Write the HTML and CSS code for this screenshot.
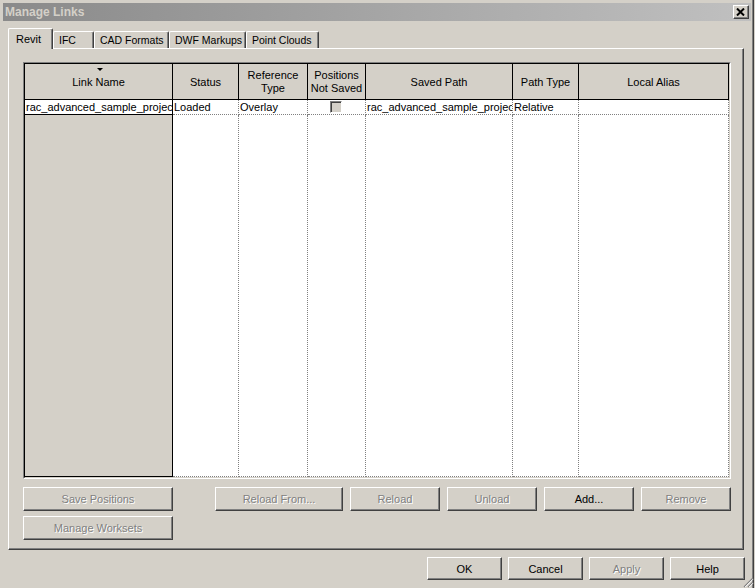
FILE: index.html
```html
<!DOCTYPE html>
<html>
<head>
<meta charset="utf-8">
<title>Manage Links</title>
<link rel="stylesheet" href="styles.css">
</head>
<body>
<div class="window">
  <div class="titlebar">
    <span class="title">Manage Links</span>
    <span class="close"><svg width="9" height="8" viewBox="0 0 9 8"><path d="M1 0.5 L8 7.5 M8 0.5 L1 7.5" stroke="#000" stroke-width="2"/></svg></span>
  </div>
  <div class="content">
    <div class="tabs">
      <div class="tab active w-revit">Revit</div>
      <div class="tab w-ifc">IFC</div>
      <div class="tab w-cad">CAD Formats</div>
      <div class="tab w-dwf">DWF Markups</div>
      <div class="tab w-pc">Point Clouds</div>
    </div>
    <div class="panel">
      <div class="grid-frame">
        <div class="grid">
          <div class="hc first"><span class="sort"></span>Link Name</div>
          <div class="hc">Status</div>
          <div class="hc">Reference<br>Type</div>
          <div class="hc">Positions<br>Not Saved</div>
          <div class="hc">Saved Path</div>
          <div class="hc">Path Type</div>
          <div class="hc">Local Alias</div>

          <div class="dc first">rac_advanced_sample_projec</div>
          <div class="dc">Loaded</div>
          <div class="dc">Overlay</div>
          <div class="dc center"><span class="check"></span></div>
          <div class="dc">rac_advanced_sample_projec</div>
          <div class="dc">Relative</div>
          <div class="dc"></div>

          <div class="fc first"></div>
          <div class="fc"></div>
          <div class="fc"></div>
          <div class="fc"></div>
          <div class="fc"></div>
          <div class="fc"></div>
          <div class="fc"></div>
        </div>
      </div>
      <div class="actions">
        <div class="left-col">
          <button class="btn disabled w150">Save Positions</button>
          <button class="btn disabled w150">Manage Worksets</button>
        </div>
        <div class="right-row">
          <button class="btn disabled w128">Reload From...</button>
          <button class="btn disabled w90">Reload</button>
          <button class="btn disabled w90">Unload</button>
          <button class="btn w90">Add...</button>
          <button class="btn disabled w90">Remove</button>
        </div>
      </div>
    </div>
    <div class="footer">
      <button class="btn fbtn">OK</button>
      <button class="btn fbtn">Cancel</button>
      <button class="btn fbtn disabled">Apply</button>
      <button class="btn fbtn">Help</button>
    </div>
  </div>
  <svg class="grip" width="11" height="11" viewBox="0 0 11 11">
    <path d="M10 1 L1 10 M10 5 L5 10 M10 9 L9 10" stroke="#808080" stroke-width="1.2"/>
    <path d="M10 2.2 L2.2 10 M10 6.2 L6.2 10" stroke="#fff" stroke-width="1"/>
  </svg>
</div>
</body>
</html>
```

FILE: styles.css
```css
* { box-sizing: border-box; }
html, body { margin: 0; padding: 0; }
body {
  width: 755px;
  height: 588px;
  overflow: hidden;
  background: #d4d0c8;
  font-family: "Liberation Sans", Arial, sans-serif;
  font-size: 11px;
  color: #000;
}
.window {
  position: relative;
  width: 754px;
  height: 588px;
  padding: 3px 3px 0 3px;
  background: #d4d0c8;
  box-shadow: inset -1px 0 #404040, inset -2px 0 #808080;
}
.titlebar {
  height: 18px;
  display: flex;
  align-items: center;
  justify-content: space-between;
  padding-left: 2px;
  padding-right: 2px;
  background: linear-gradient(to right, #8a8a8a, #c0c0c0);
}
.title {
  color: #d4d0c8;
  font-weight: bold;
  font-size: 12px;
}
.close {
  width: 16px;
  height: 14px;
  background: #d4d0c8;
  border-top: 1px solid #fff;
  border-left: 1px solid #fff;
  border-right: 1px solid #404040;
  border-bottom: 1px solid #404040;
  box-shadow: inset -1px -1px #808080;
  display: flex;
  align-items: center;
  justify-content: center;
  padding: 0 1px 1px 0;
}
.close svg { display: block; }
.content {
  padding: 7px 6px 0 5px;
}
.tabs {
  display: flex;
  align-items: flex-end;
  height: 20px;
  position: relative;
  z-index: 2;
}
.tab {
  height: 17px;
  padding: 2px 0 0 5px;
  line-height: 13px;
  font-size: 10.5px;
  background: #d4d0c8;
  border-top: 1px solid #fff;
  border-left: 1px solid #fff;
  border-right: 1px solid #404040;
  box-shadow: inset -1px 0 #808080;
  border-radius: 2px 2px 0 0;
  white-space: nowrap;
  overflow: hidden;
}
.tab.active {
  height: 21px;
  margin-bottom: -1px;
  padding: 4px 0 0 7px;
  font-size: 11px;
}
.w-revit { width: 45px; }
.w-ifc { width: 41px; }
.w-cad { width: 75px; }
.w-dwf { width: 77px; }
.w-pc { width: 73px; }
.panel {
  width: 736px;
  height: 502px;
  border-top: 1px solid #fff;
  border-left: 1px solid #fff;
  border-right: 1px solid #404040;
  border-bottom: 1px solid #404040;
  box-shadow: inset -1px -1px #808080;
  padding: 13px 0 0 14px;
}
.grid-frame {
  width: 708px;
  height: 417px;
  border-top: 1px solid #808080;
  border-left: 1px solid #808080;
  border-right: 1px solid #fff;
  border-bottom: 1px solid #fff;
}
.grid {
  width: 706px;
  height: 415px;
  border-top: 1px solid #000;
  border-left: 1px solid #000;
  border-right: 1px solid #d4d0c8;
  border-bottom: 1px solid #d4d0c8;
  display: grid;
  grid-template-columns: 148px 66px 69px 58px 147px 66px 150px;
  grid-template-rows: 36px 15px 1fr;
  background: #fff;
}
.hc {
  position: relative;
  background: #d4d0c8;
  border-right: 1px solid #000;
  border-bottom: 1px solid #000;
  display: flex;
  align-items: center;
  justify-content: center;
  text-align: center;
  line-height: 13px;
  padding-top: 1px;
}
.sort {
  position: absolute;
  top: 4px;
  left: 72px;
  width: 0;
  height: 0;
  border-left: 3px solid transparent;
  border-right: 3px solid transparent;
  border-top: 3px solid #000;
}
.dc {
  background: #fff;
  border-right: 1px dotted #808080;
  border-bottom: 1px dotted #808080;
  line-height: 14px;
  padding-left: 1px;
  white-space: nowrap;
  overflow: hidden;
}
.dc.first {
  border-right: 1px solid #000;
  border-bottom: 1px solid #000;
  padding-left: 1px;
}
.dc.center {
  display: flex;
  justify-content: center;
  align-items: flex-start;
  padding-left: 0;
}
.check {
  display: block;
  width: 12px;
  height: 12px;
  margin-top: 1px;
  margin-left: -1px;
  background: #d4d0c8;
  border-top: 1px solid #808080;
  border-left: 1px solid #808080;
  border-right: 1px solid #fff;
  border-bottom: 1px solid #fff;
  box-shadow: inset 1px 1px #404040;
}
.fc {
  background: #fff;
  border-right: 1px dotted #808080;
  border-bottom: 1px dotted #808080;
}
.fc.first {
  background: #d4d0c8;
  border-right: 1px solid #000;
  border-bottom: 1px solid #000;
}
.actions {
  display: flex;
  margin-top: 8px;
  gap: 42px;
}
.left-col {
  display: flex;
  flex-direction: column;
  gap: 5px;
}
.right-row {
  display: flex;
  gap: 7px;
  align-items: flex-start;
}
.btn {
  height: 24px;
  margin: 0;
  padding: 0;
  font-family: "Liberation Sans", Arial, sans-serif;
  font-size: 11px;
  color: #000;
  background: #d4d0c8;
  border-top: 1px solid #fff;
  border-left: 1px solid #fff;
  border-right: 1px solid #404040;
  border-bottom: 1px solid #404040;
  box-shadow: inset -1px -1px #808080;
  border-radius: 0;
  text-align: center;
}
.btn.disabled {
  color: #808080;
  text-shadow: 1px 1px 0 #fff;
}
.w150 { width: 150px; }
.w128 { width: 128px; }
.w90 { width: 90px; }
.footer {
  display: flex;
  justify-content: flex-end;
  gap: 6px;
  margin-top: 7px;
}
.fbtn {
  width: 75px;
  height: 23px;
}
.grip {
  position: absolute;
  right: 0;
  bottom: 0;
  display: block;
}
```
